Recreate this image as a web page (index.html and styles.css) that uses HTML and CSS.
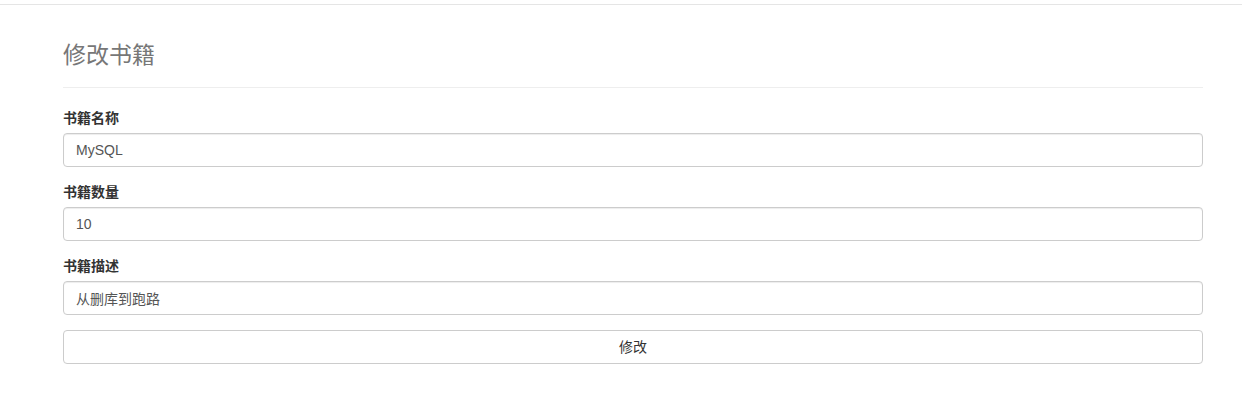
FILE: index.html
```html
<!DOCTYPE html>
<html lang="zh-CN">
<head>
<meta charset="utf-8">
<title>修改书籍</title>
<link rel="stylesheet" href="styles.css">
</head>
<body>
<div class="topbar"></div>
<div class="container">
  <div class="page-header">
    <h1 class="title">修改书籍</h1>
  </div>
  <form class="form">
    <div class="form-group">
      <label class="label">书籍名称</label>
      <input class="input" type="text" value="MySQL">
    </div>
    <div class="form-group">
      <label class="label">书籍数量</label>
      <input class="input" type="text" value="10">
    </div>
    <div class="form-group">
      <label class="label">书籍描述</label>
      <input class="input" type="text" value="从删库到跑路">
    </div>
    <div class="form-group">
      <button class="btn" type="button">修改</button>
    </div>
  </form>
</div>
</body>
</html>
```
FILE: styles.css
```css
* { box-sizing: border-box; }
html, body { margin: 0; padding: 0; background: #fff; }
body {
  font-family: "Liberation Sans", "Noto Sans CJK SC", sans-serif;
  font-size: 14px;
  line-height: 20px;
  color: #333;
}
.topbar {
  height: 5px;
  border-bottom: 1px solid #e5e5e5;
}
.container {
  width: 1140px;
  margin-left: 63px;
}
.page-header {
  padding-top: 37px;
  padding-bottom: 9px;
  border-bottom: 1px solid #eee;
  margin-bottom: 20px;
}
.title {
  margin: 0 0 10px;
  font-size: 23px;
  line-height: 26px;
  font-weight: normal;
  color: #777;
}
.form { margin: 0; }
.form-group { margin-bottom: 15px; }
.label {
  display: block;
  font-weight: bold;
  margin-bottom: 5px;
  line-height: 20px;
}
.input {
  display: block;
  width: 100%;
  height: 34px;
  padding: 6px 12px;
  font-family: inherit;
  font-size: 14px;
  line-height: 20px;
  color: #555;
  background: #fff;
  border: 1px solid #ccc;
  border-radius: 4px;
  box-shadow: inset 0 1px 1px rgba(0,0,0,.075);
  outline: none;
}
.btn {
  display: block;
  width: 100%;
  height: 34px;
  padding: 6px 12px;
  font-family: inherit;
  font-size: 14px;
  line-height: 20px;
  color: #333;
  background: #fff;
  border: 1px solid #ccc;
  border-radius: 4px;
  text-align: center;
  cursor: pointer;
}
```
